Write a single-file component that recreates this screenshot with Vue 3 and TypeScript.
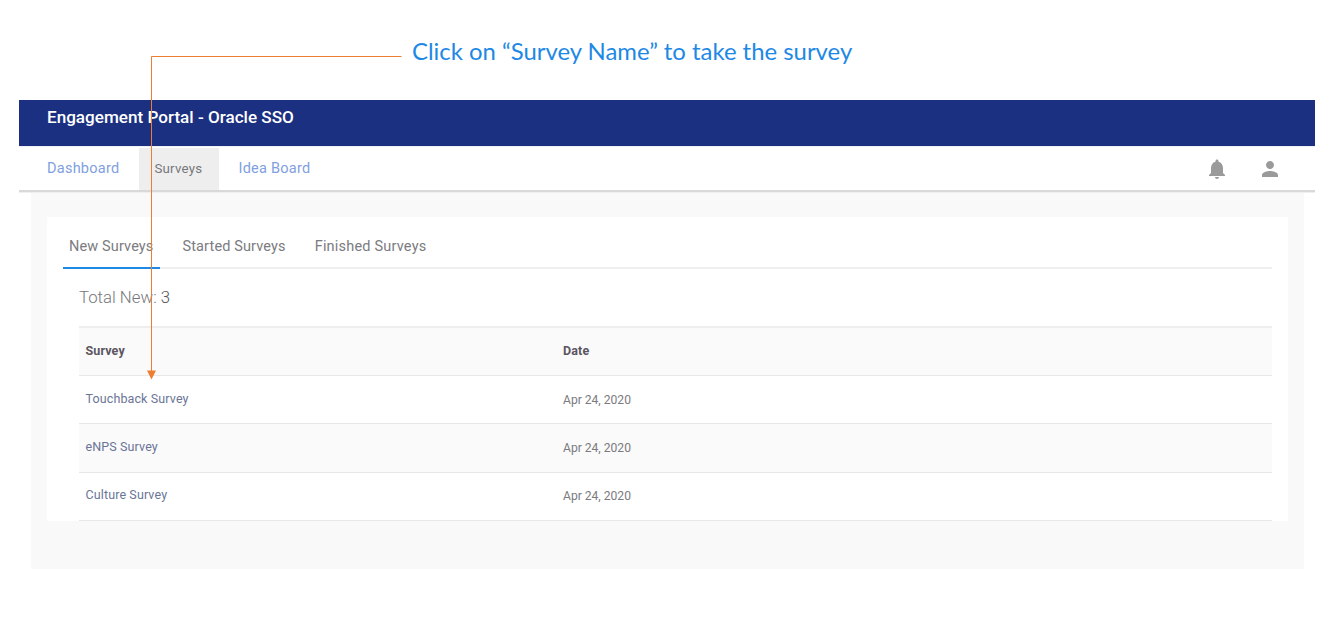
<script setup lang="ts">
interface Row { name: string; date: string }
const rows: Row[] = [
  { name: 'Touchback Survey', date: 'Apr 24, 2020' },
  { name: 'eNPS Survey', date: 'Apr 24, 2020' },
  { name: 'Culture Survey', date: 'Apr 24, 2020' },
]
const navItems = ['Dashboard', 'Surveys', 'Idea Board']
const tabs = ['New Surveys', 'Started Surveys', 'Finished Surveys']
</script>

<template>
  <div class="page">
    <div class="frame">
      <header class="banner">Engagement Portal - Oracle SSO</header>
      <nav class="nav">
        <a v-for="n in navItems" :key="n" class="nav-item" :class="{ active: n === 'Surveys' }">{{ n }}</a>
        <div class="nav-icons">
          <svg width="24" height="24" viewBox="0 0 24 24" fill="#9a9a9a"><path d="M12 22c1.100 0 2-.9 2-2h-4c0 1.100.9 2 2 2zm6-6v-5c0-3.070-1.640-5.640-4.500-6.320V4c0-.83-.67-1.500-1.500-1.500s-1.500.67-1.500 1.500v.68C7.630 5.360 6 7.920 6 11v5l-2 2v1h16v-1l-2-2z"/></svg>
          <svg width="24" height="24" viewBox="0 0 24 24" fill="#9a9a9a"><path d="M12 12c2.210 0 4-1.790 4-4s-1.790-4-4-4-4 1.790-4 4 1.790 4 4 4zm0 2c-2.670 0-8 1.340-8 4v2h16v-2c0-2.660-5.330-4-8-4z"/></svg>
        </div>
      </nav>
      <main class="panel">
        <section class="card">
          <div class="tabs">
            <div v-for="(t, i) in tabs" :key="t" class="tab" :class="{ on: i === 0 }">{{ t }}</div>
          </div>
          <div class="body">
            <div class="total">Total New: <span class="count">3</span></div>
            <div class="table">
              <div class="tr head"><div class="c1">Survey</div><div class="c2">Date</div></div>
              <div v-for="r in rows" :key="r.name" class="tr">
                <div class="c1 link">{{ r.name }}</div>
                <div class="c2 date">{{ r.date }}</div>
              </div>
            </div>
          </div>
        </section>
      </main>
    </div>

    <div class="callout">Click on “Survey Name” to take the survey</div>
    <svg class="leader" width="1338" height="639" viewBox="0 0 1338 639">
      <path d="M401.500 56.500H151.500V371" fill="none" stroke="#ed7d31" stroke-width="1" />
      <path d="M147 370.500h9l-4.500 9z" fill="#ed7d31" />
    </svg>
  </div>
</template>

<style>
html, body { margin: 0; background: #fff; }
</style>

<style scoped>
.page {
  position: relative;
  width: 1338px;
  height: 639px;
  overflow: hidden;
  padding: 100px 23px 0 19px;
  box-sizing: border-box;
  font-family: "Open Sans", "Noto Sans", sans-serif;
  color: #6f6f72;
}
.banner {
  height: 46px;
  box-sizing: border-box;
  padding: 6px 0 0 28px;
  background: #1b3081;
  color: #fff;
  font: 500 17.100px/23px Roboto, sans-serif;
}
.nav {
  display: flex;
  align-items: center;
  height: 44px;
  padding: 0 0 0 18px;
  box-sizing: border-box;
  background: #fff;
  border-top: 1px solid #eef0f6;
  box-shadow: 0 2px 0 #d9d9d9, 0 3px 0 #efefef;
  position: relative;
  font: 400 14.500px/20px Roboto, sans-serif;
}
.nav-item {
  height: 42px;
  padding: 0 10px;
  margin-right: 10px;
  display: flex;
  align-items: center;
  color: #7f9fe0;
  letter-spacing: .25px;
}
.nav-item:nth-child(2) { padding: 0 17px 0 15px; margin-right: 9px; }
.nav-item.active { background: #eeeeee; color: #77777b; font-size: 13.300px; }
.nav-icons {
  margin-left: auto;
  display: flex;
  gap: 29px;
  padding-right: 33px;
}
.panel {
  margin: 0 11px 0 12px;
  height: 379px;
  padding: 27px 16px 0;
  box-sizing: border-box;
  background: #f9f9f9;
}
.card {
  height: 304px;
  padding: 0 16px;
  background: #fff;
}
.tabs {
  display: flex;
  height: 52px;
  box-sizing: border-box;
  border-bottom: 2px solid #eeeeee;
}
.tab {
  height: 52px;
  box-sizing: border-box;
  padding: 20px 6px 0;
  margin-right: 16px;
  font: 400 14.500px/20px Roboto, sans-serif;
  letter-spacing: .13px;
  color: #7b7b80;
}
.tab:nth-child(2) { margin-right: 17px; }
.tab:nth-child(3) { letter-spacing: .2px; }
.tab.on { border-bottom: 2px solid #1e88e5; padding-right: 7px; }
.body { padding: 0 0 0 16px; }
.total {
  height: 57px;
  box-sizing: border-box;
  padding-top: 17px;
  font: 300 16.800px/22px Roboto, sans-serif;
  color: #77777b;
}
.count { color: #55555a; }
.table { border-top: 2px solid #eeeeee; }
.tr {
  display: flex;
  align-items: center;
  height: 48.330px;
  box-sizing: border-box;
  padding: 0 0 2px 6.500px;
  border-bottom: 1px solid #e8e8e8;
  font: 400 12.500px/16px Roboto, sans-serif;
  letter-spacing: .12px;
}
.tr.head {
  height: 48px;
  background: #fafafa;
  font-weight: 700;
  color: #5b5560;
}
.tr:nth-child(3) { background: #fafafa; }
.c1 { width: 477.500px; }
.link { color: #6a7596; }
.date { color: #7b7b80; padding-top: 2px; font-size: 12.100px; letter-spacing: 0; }
.callout {
  position: absolute;
  left: 412px;
  top: 36px;
  font: 400 23.900px/30px Lato, sans-serif;
  color: #1e88e5;
}
.leader { position: absolute; left: 0; top: 0; pointer-events: none; }
</style>
